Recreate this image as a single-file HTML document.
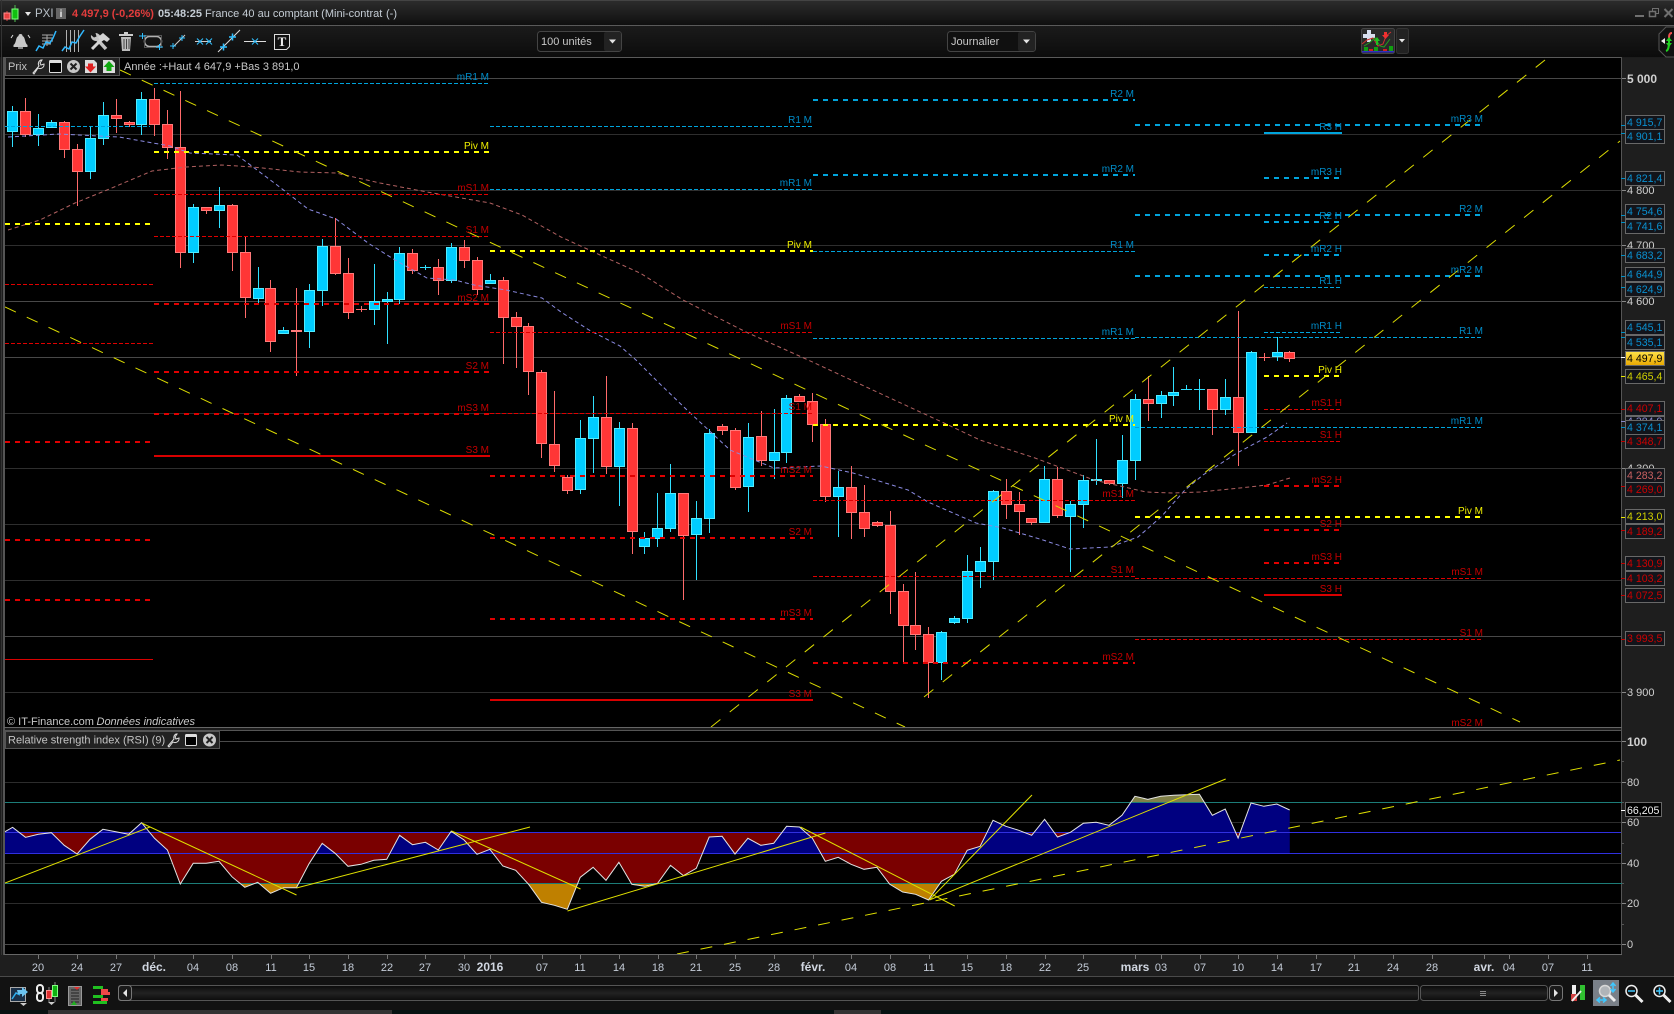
<!DOCTYPE html>
<html><head><meta charset="utf-8"><title>PXI</title>
<style>
html,body{margin:0;padding:0;background:#1c1c1c;width:1674px;height:1014px;overflow:hidden}
svg{display:block;position:absolute;left:0;top:0}
text{font-family:"Liberation Sans",sans-serif}
</style></head><body>
<svg width="1674" height="1014" viewBox="0 0 1674 1014" xmlns="http://www.w3.org/2000/svg">
<defs>
<linearGradient id="gt" x1="0" y1="0" x2="0" y2="1"><stop offset="0" stop-color="#2c2c2c"/><stop offset="1" stop-color="#0f0f0f"/></linearGradient>
<linearGradient id="gb" x1="0" y1="0" x2="0" y2="1"><stop offset="0" stop-color="#1b1b1b"/><stop offset="1" stop-color="#0c0c0c"/></linearGradient>
<linearGradient id="gs" x1="0" y1="0" x2="0" y2="1"><stop offset="0" stop-color="#0a0a0a"/><stop offset=".5" stop-color="#222"/><stop offset="1" stop-color="#0c0c0c"/></linearGradient>
<linearGradient id="gy" x1="0" y1="0" x2="0" y2="1"><stop offset="0" stop-color="#ffe24a"/><stop offset="1" stop-color="#e8a800"/></linearGradient>
<clipPath id="ca"><polygon points="5,731 5,831.7 12.6,827.3 25.5,837.3 38.4,834.3 51.3,832.7 64.2,845.3 77.1,854 90,839.3 102.9,829.3 115.8,831.7 128.7,834.3 141.6,822.7 154.5,838.3 167.4,850 180.3,884 193.2,863.3 206.1,863.3 219,861.3 231.9,876.7 244.8,887.3 257.7,882.3 270.6,893.3 283.5,887.7 296.4,887.7 309.3,863.3 322.2,843.3 335.1,853.3 348,866.3 360.9,864.3 373.8,860.3 386.7,859.3 399.6,835.3 412.5,844.7 425.4,842.3 438.3,850 451.2,831.3 464.1,840 477,854.3 489.9,849.3 502.8,866 515.7,870.3 528.6,884.3 541.5,902.3 554.4,905.3 567.3,909.3 580.2,877.3 593.1,867.3 606,880.3 618.9,862.3 631.8,884.3 644.7,886.3 657.6,883.3 670.5,865.3 683.4,875.7 696.3,868.3 709.2,837 722.1,836.3 735,854 747.9,838.3 760.8,845.3 773.7,843.3 786.6,826.3 799.5,827 812.4,838.3 825.3,861.3 838.2,857.3 851.1,864.3 864,869.3 876.9,867.3 889.8,884.3 902.7,892 915.6,894.3 928.5,900 941.4,881.3 954.3,874.3 967.2,850.3 980.1,846.3 993,820.3 1005.9,826.3 1018.8,830.3 1031.7,835.3 1044.6,819.3 1057.5,837 1070.4,832.3 1083.3,823.3 1096.2,822.3 1109.1,825.3 1122,815.3 1134.9,796.3 1147.8,799.3 1160.7,796.3 1173.6,795.3 1186.5,794.7 1199.4,794.3 1212.3,815.3 1225.2,809 1238.1,838 1251,803 1263.9,806.3 1276.8,804 1289.7,810 1290,731"/></clipPath>
<clipPath id="cb"><polygon points="5,954 5,831.7 12.6,827.3 25.5,837.3 38.4,834.3 51.3,832.7 64.2,845.3 77.1,854 90,839.3 102.9,829.3 115.8,831.7 128.7,834.3 141.6,822.7 154.5,838.3 167.4,850 180.3,884 193.2,863.3 206.1,863.3 219,861.3 231.9,876.7 244.8,887.3 257.7,882.3 270.6,893.3 283.5,887.7 296.4,887.7 309.3,863.3 322.2,843.3 335.1,853.3 348,866.3 360.9,864.3 373.8,860.3 386.7,859.3 399.6,835.3 412.5,844.7 425.4,842.3 438.3,850 451.2,831.3 464.1,840 477,854.3 489.9,849.3 502.8,866 515.7,870.3 528.6,884.3 541.5,902.3 554.4,905.3 567.3,909.3 580.2,877.3 593.1,867.3 606,880.3 618.9,862.3 631.8,884.3 644.7,886.3 657.6,883.3 670.5,865.3 683.4,875.7 696.3,868.3 709.2,837 722.1,836.3 735,854 747.9,838.3 760.8,845.3 773.7,843.3 786.6,826.3 799.5,827 812.4,838.3 825.3,861.3 838.2,857.3 851.1,864.3 864,869.3 876.9,867.3 889.8,884.3 902.7,892 915.6,894.3 928.5,900 941.4,881.3 954.3,874.3 967.2,850.3 980.1,846.3 993,820.3 1005.9,826.3 1018.8,830.3 1031.7,835.3 1044.6,819.3 1057.5,837 1070.4,832.3 1083.3,823.3 1096.2,822.3 1109.1,825.3 1122,815.3 1134.9,796.3 1147.8,799.3 1160.7,796.3 1173.6,795.3 1186.5,794.7 1199.4,794.3 1212.3,815.3 1225.2,809 1238.1,838 1251,803 1263.9,806.3 1276.8,804 1289.7,810 1290,954"/></clipPath>
<clipPath id="cp"><rect x="5" y="58" width="1616" height="669"/></clipPath>
<clipPath id="cr"><rect x="5" y="731" width="1616" height="223"/></clipPath>
</defs>

<!-- window chrome -->
<rect width="1674" height="1014" fill="#1c1c1c"/>
<rect x="0" y="1" width="1674" height="24" fill="url(#gt)"/>
<rect x="0" y="0" width="1674" height="1" fill="#444"/>
<rect x="0" y="25" width="1674" height="1" fill="#5a5a5a"/>
<rect x="0" y="26" width="1674" height="31" fill="url(#gb)"/>
<rect x="1" y="0" width="1" height="1010" fill="#333"/>
<rect x="3" y="57" width="2" height="920" fill="#555"/>

<!-- chart panels -->
<rect x="5" y="58" width="1616" height="669" fill="#000"/>
<rect x="5" y="731" width="1616" height="223" fill="#000"/>
<rect x="4" y="57" width="1618" height="1" fill="#5a5a5a"/>
<rect x="1621" y="57" width="1" height="898" fill="#555"/>
<rect x="4" y="727" width="1618" height="1" fill="#666"/>
<rect x="4" y="730" width="1618" height="1" fill="#555"/>
<rect x="4" y="954" width="1618" height="1" fill="#666"/>
<rect x="0" y="976" width="1674" height="1" fill="#4a4a4a"/>
<rect x="0" y="977" width="1674" height="33" fill="#121212"/>
<rect x="0" y="1010" width="1674" height="4" fill="#061212"/>
<rect x="48" y="1010" width="344" height="4" fill="#333"/>
<rect x="834" y="1010" width="47" height="4" fill="#333"/>

<!-- price grid -->
<g shape-rendering="crispEdges">
<path d="M5 78.5H1621M5 301.5H1621M5 357.5H1621M5 636.5H1621" stroke="#484848"/>
<path d="M5 134.5H1621M5 190.5H1621M5 245.5H1621M5 413.5H1621M5 468.5H1621M5 524.5H1621M5 580.5H1621M5 692.5H1621" stroke="#2e2e2e"/>
</g>

<!-- candles -->
<g shape-rendering="crispEdges" fill="none">
<path stroke="#ff6a6a" d="M25.5 98V137M64.5 121V158M77.5 144V206M116.5 99V133M129.5 121V127M154.5 88V136M167.5 110V159M180.5 91V268M206.5 207V214M232.5 204V271M245.5 236V318M270.5 280V352M296.5 288V376M335.5 218V275M348.5 258V319M361.5 306V312M412.5 249V274M438.5 259V295M464.5 240V268M477.5 257V295M503.5 277V364M516.5 312V368M528.5 323V395M541.5 370V458M554.5 391V472M567.5 475V494M606.5 376V474M632.5 423V554M683.5 493V600M722.5 424V435M735.5 428V490M761.5 411V466M799.5 394V402M812.5 393V442M825.5 419V502M851.5 466V539M864.5 485V537M877.5 521V527M890.5 511V614M903.5 584V663M915.5 572V650M928.5 627V698M1006.5 479V519M1019.5 492V535M1031.5 518V525M1057.5 467V518M1109.5 480V485M1148.5 376V421M1212.5 389V435M1238.5 311V466M1264.5 353V361M1289.5 351V362M356 309.5H367M1259 357.5H1270"/>
<path stroke="#30e0ff" d="M12.5 106V147M38.5 114V146M51.5 120V128M90.5 127V179M103.5 102V145M141.5 92V135M193.5 204V263M219.5 187V228M258.5 267V303M283.5 327V334M309.5 284V348M322.5 239V306M374.5 264V325M387.5 292V344M399.5 247V304M425.5 265V270M451.5 243V283M490.5 274V284M580.5 420V494M593.5 396V473M619.5 422V506M644.5 532V554M657.5 493V547M670.5 464V532M696.5 501V580M709.5 429V533M748.5 423V512M774.5 409V479M786.5 395V463M838.5 471V537M941.5 631V680M954.5 616V624M967.5 555V623M980.5 547V588M993.5 490V580M1044.5 466V523M1070.5 501V572M1083.5 475V528M1096.5 439V485M1122.5 435V498M1135.5 394V480M1161.5 391V418M1173.5 367V406M1186.5 385V390M1199.5 379V410M1225.5 379V415M1251.5 351V433M1277.5 337V361M420 267.5H431M1181 389.5H1192M1194 389.5H1205"/>
<path fill="#ff3636" stroke="#ff7a7a" d="M20.5 111.5h10v23h-10zM59.5 122.5h10v27h-10zM72.5 149.5h10v22h-10zM111.5 115.5h10v3h-10zM124.5 122.5h10v2h-10zM149.5 99.5h10v25h-10zM162.5 124.5h10v23h-10zM175.5 147.5h10v105h-10zM201.5 207.5h10v3h-10zM227.5 205.5h10v47h-10zM240.5 252.5h10v45h-10zM265.5 288.5h10v53h-10zM291.5 330.5h10v1h-10zM330.5 246.5h10v27h-10zM343.5 273.5h10v39h-10zM407.5 253.5h10v17h-10zM433.5 267.5h10v13h-10zM459.5 247.5h10v13h-10zM472.5 260.5h10v29h-10zM498.5 280.5h10v37h-10zM511.5 317.5h10v9h-10zM523.5 326.5h10v45h-10zM536.5 372.5h10v71h-10zM549.5 444.5h10v21h-10zM562.5 477.5h10v13h-10zM601.5 417.5h10v49h-10zM627.5 428.5h10v103h-10zM678.5 493.5h10v42h-10zM717.5 426.5h10v4h-10zM730.5 430.5h10v57h-10zM756.5 436.5h10v24h-10zM794.5 396.5h10v5h-10zM807.5 401.5h10v23h-10zM820.5 424.5h10v72h-10zM846.5 487.5h10v25h-10zM859.5 512.5h10v16h-10zM872.5 522.5h10v3h-10zM885.5 525.5h10v66h-10zM898.5 591.5h10v34h-10zM910.5 625.5h10v9h-10zM923.5 634.5h10v28h-10zM1001.5 491.5h10v13h-10zM1014.5 504.5h10v7h-10zM1026.5 518.5h10v4h-10zM1052.5 479.5h10v36h-10zM1104.5 480.5h10v3h-10zM1143.5 399.5h10v4h-10zM1207.5 389.5h10v20h-10zM1233.5 397.5h10v35h-10zM1284.5 352.5h10v6h-10z"/>
<path fill="#00ccff" stroke="#50ecff" d="M7.5 111.5h10v20h-10zM33.5 128.5h10v6h-10zM46.5 122.5h10v5h-10zM85.5 138.5h10v33h-10zM98.5 115.5h10v23h-10zM136.5 99.5h10v25h-10zM188.5 207.5h10v45h-10zM214.5 205.5h10v5h-10zM253.5 288.5h10v10h-10zM278.5 330.5h10v3h-10zM304.5 290.5h10v41h-10zM317.5 246.5h10v44h-10zM369.5 301.5h10v8h-10zM382.5 299.5h10v2h-10zM394.5 253.5h10v46h-10zM446.5 247.5h10v33h-10zM485.5 280.5h10v3h-10zM575.5 438.5h10v51h-10zM588.5 417.5h10v21h-10zM614.5 428.5h10v38h-10zM639.5 538.5h10v8h-10zM652.5 528.5h10v10h-10zM665.5 493.5h10v35h-10zM691.5 518.5h10v16h-10zM704.5 433.5h10v85h-10zM743.5 437.5h10v49h-10zM769.5 452.5h10v8h-10zM781.5 398.5h10v54h-10zM833.5 487.5h10v9h-10zM936.5 632.5h10v30h-10zM949.5 618.5h10v4h-10zM962.5 571.5h10v47h-10zM975.5 561.5h10v10h-10zM988.5 491.5h10v70h-10zM1039.5 479.5h10v43h-10zM1065.5 504.5h10v12h-10zM1078.5 480.5h10v24h-10zM1091.5 479.5h10v1h-10zM1117.5 460.5h10v23h-10zM1130.5 399.5h10v61h-10zM1156.5 395.5h10v8h-10zM1168.5 392.5h10v3h-10zM1220.5 397.5h10v12h-10zM1246.5 352.5h10v80h-10zM1272.5 352.5h10v4h-10z"/>
</g>

<!-- moving averages -->
<g fill="none" stroke-width="1" stroke-dasharray="4 3" clip-path="url(#cp)">
<polyline stroke="#8a8ae0" points="8,137 59,134 119,137 170,146 190,153 237,155 277,185 308,209 336,219 368,243 395,260 427,278 455,280 474,285 506,290 542,298 561,312 589,330 620,346 636,360 659,383 687,410 730,450 774,468 821,466 853,473 908,490 928,502 976,523 1003,528 1043,540 1070,549 1110,547 1138,537 1161,517 1185,490 1203,475 1237,453 1267,437 1287,423"/>
<polyline stroke="#b06060" points="8,230 40,220 75,203 107,190 152,171 186,167 221,165 253,167 300,172 336,173 380,183 427,192 490,203 522,215 561,237 585,248 600,255 640,273 683,300 746,332 806,359 877,392 944,423 980,440 1035,458 1094,480 1146,492 1173,493 1200,492 1240,488 1267,485 1290,478"/>
</g>

<!-- pivot levels -->
<g fill="none" shape-rendering="crispEdges">
<path stroke="#00a4dc" stroke-width="2" stroke-dasharray="5 5" d="M813 100H1135M813 175H1135M1135 125H1480M1135 215H1480M1135 276H1480M1264 178H1340M1264 222H1340M1264 255H1340"/>
<g transform="translate(0,.5)">
<path stroke="#00a4dc" stroke-dasharray="4 2" d="M154 83H490M5 126H150M490 126H813M490 189H813M813 251H1135M813 338H1135M1135 337H1483M1135 427H1483M1264 287H1342M1264 332H1342"/>
<path stroke="#e00000" stroke-dasharray="4 2" d="M5 284H153M5 343H153M154 194H490M154 236H490M490 332H813M490 413H813M813 500H1135M813 576H1135M1135 578H1483M1135 639H1483M1264 409H1342M1264 441H1342"/>
<path stroke="#d80000" d="M5 659H153"/>
</g>
<path stroke="#ffff00" stroke-width="2" stroke-dasharray="5 5" d="M154 152H490M5 224H150M490 251H813M813 425H1135M1135 517H1480M1264 376H1340"/>
<path stroke="#e00000" stroke-width="2" stroke-dasharray="5 5" d="M154 304H490M154 372H490M154 414H490M490 476H813M490 538H813M490 619H813M813 663H1135M1264 486H1340M1264 530H1340M1264 563H1340M5 442H150M5 540H150M5 600H150"/>
<path stroke="#d80000" stroke-width="2" d="M154 456H490M490 700H813M1264 595H1342"/>
<path stroke="#00a4dc" stroke-width="2" d="M1264 133H1342"/>
</g>

<!-- diagonals -->
<g fill="none" stroke="#dcdc00" stroke-width="1" stroke-dasharray="12 12" clip-path="url(#cp)">
<path d="M120 70L1520 722"/>
<path d="M5 307L905 727"/>
<path d="M711 727L1545 60"/>
<path d="M924 697L1620 141"/>
</g>

<!-- level labels -->
<g font-size="10" text-anchor="end">
<g fill="#008cc8">
<text x="489" y="80">mR1 M</text>
<text x="812" y="123">R1 M</text>
<text x="812" y="186">mR1 M</text>
<text x="1134" y="97">R2 M</text>
<text x="1134" y="172">mR2 M</text>
<text x="1134" y="248">R1 M</text>
<text x="1134" y="335">mR1 M</text>
<text x="1483" y="122">mR3 M</text>
<text x="1483" y="212">R2 M</text>
<text x="1483" y="273">mR2 M</text>
<text x="1483" y="334">R1 M</text>
<text x="1483" y="424">mR1 M</text>
<text x="1342" y="130">R3 H</text>
<text x="1342" y="175">mR3 H</text>
<text x="1342" y="219">R2 H</text>
<text x="1342" y="252">mR2 H</text>
<text x="1342" y="284">R1 H</text>
<text x="1342" y="329">mR1 H</text>
</g>
<g fill="#f0f000">
<text x="489" y="149">Piv M</text>
<text x="812" y="248">Piv M</text>
<text x="1134" y="422">Piv M</text>
<text x="1483" y="514">Piv M</text>
<text x="1342" y="373">Piv H</text>
</g>
<g fill="#c40000">
<text x="489" y="191">mS1 M</text>
<text x="489" y="233">S1 M</text>
<text x="489" y="301">mS2 M</text>
<text x="489" y="369">S2 M</text>
<text x="489" y="411">mS3 M</text>
<text x="489" y="453">S3 M</text>
<text x="812" y="329">mS1 M</text>
<text x="812" y="410">S1 M</text>
<text x="812" y="473">mS2 M</text>
<text x="812" y="535">S2 M</text>
<text x="812" y="616">mS3 M</text>
<text x="812" y="697">S3 M</text>
<text x="1134" y="497">mS1 M</text>
<text x="1134" y="573">S1 M</text>
<text x="1134" y="660">mS2 M</text>
<text x="1483" y="575">mS1 M</text>
<text x="1483" y="636">S1 M</text>
<text x="1483" y="726">mS2 M</text>
<text x="1342" y="406">mS1 H</text>
<text x="1342" y="438">S1 H</text>
<text x="1342" y="483">mS2 H</text>
<text x="1342" y="527">S2 H</text>
<text x="1342" y="560">mS3 H</text>
<text x="1342" y="592">S3 H</text>
</g>
</g>

<!-- RSI -->
<g shape-rendering="crispEdges">
<path d="M5 741.5H1621M5 944.5H1621" stroke="#4a4a4a"/>
<path d="M5 782.5H1621M5 822.5H1621M5 863.5H1621M5 903.5H1621" stroke="#2c2c2c"/>
</g>
<g clip-path="url(#ca)"><rect x="5" y="832" width="1285" height="51" fill="#7a0000"/><rect x="5" y="883" width="1285" height="71" fill="#bf8000"/></g>
<g clip-path="url(#cb)"><rect x="5" y="802" width="1285" height="51" fill="#000080"/><rect x="5" y="731" width="1285" height="71" fill="#808048"/></g>
<g shape-rendering="crispEdges">
<path d="M5 802.5H1627M5 883.5H1627" stroke="#1c7c78"/>
<path d="M5 832.5H1621M5 853.5H1621" stroke="#3030e0"/>
</g>
<polyline fill="none" stroke="#e4e4e4" stroke-width="1" points="5,831.7 12.6,827.3 25.5,837.3 38.4,834.3 51.3,832.7 64.2,845.3 77.1,854 90,839.3 102.9,829.3 115.8,831.7 128.7,834.3 141.6,822.7 154.5,838.3 167.4,850 180.3,884 193.2,863.3 206.1,863.3 219,861.3 231.9,876.7 244.8,887.3 257.7,882.3 270.6,893.3 283.5,887.7 296.4,887.7 309.3,863.3 322.2,843.3 335.1,853.3 348,866.3 360.9,864.3 373.8,860.3 386.7,859.3 399.6,835.3 412.5,844.7 425.4,842.3 438.3,850 451.2,831.3 464.1,840 477,854.3 489.9,849.3 502.8,866 515.7,870.3 528.6,884.3 541.5,902.3 554.4,905.3 567.3,909.3 580.2,877.3 593.1,867.3 606,880.3 618.9,862.3 631.8,884.3 644.7,886.3 657.6,883.3 670.5,865.3 683.4,875.7 696.3,868.3 709.2,837 722.1,836.3 735,854 747.9,838.3 760.8,845.3 773.7,843.3 786.6,826.3 799.5,827 812.4,838.3 825.3,861.3 838.2,857.3 851.1,864.3 864,869.3 876.9,867.3 889.8,884.3 902.7,892 915.6,894.3 928.5,900 941.4,881.3 954.3,874.3 967.2,850.3 980.1,846.3 993,820.3 1005.9,826.3 1018.8,830.3 1031.7,835.3 1044.6,819.3 1057.5,837 1070.4,832.3 1083.3,823.3 1096.2,822.3 1109.1,825.3 1122,815.3 1134.9,796.3 1147.8,799.3 1160.7,796.3 1173.6,795.3 1186.5,794.7 1199.4,794.3 1212.3,815.3 1225.2,809 1238.1,838 1251,803 1263.9,806.3 1276.8,804 1289.7,810"/>
<g fill="none" stroke="#e0e000" stroke-width="1" clip-path="url(#cr)">
<path d="M5 883L150 827"/>
<path d="M141.5 823L296.5 895"/>
<path d="M296.5 888L530 827"/>
<path d="M451.5 831L580.5 889"/>
<path d="M567.5 911L825.4 833"/>
<path d="M800.5 827L954.7 906"/>
<path d="M929.4 900L1032 795"/>
<path d="M929.4 900L1225.7 779"/>
<path d="M677 954L1620 760" stroke-dasharray="12 12"/>
</g>

<!-- right axis -->
<rect x="1622" y="58" width="52" height="918" fill="#1e1e1e"/>
<g shape-rendering="crispEdges" stroke="#888">
<path d="M1622 78.5H1626M1622 190.5H1626M1622 245.5H1626M1622 301.5H1626M1622 468.5H1626M1622 692.5H1626M1622 741.5H1626M1622 782.5H1626M1622 822.5H1626M1622 863.5H1626M1622 903.5H1626M1622 944.5H1626"/>
<path stroke="#555" d="M1622 843.5H1624M1622 924.5H1624M1622 761.5H1624M1622 802.5H1624M1622 883.5H1624"/>
<path stroke="#0090c8" d="M1621 125.5H1625M1621 133.5H1625M1621 178.5H1625M1621 215.5H1625M1621 222.5H1625M1621 255.5H1625M1621 276.5H1625M1621 287.5H1625M1621 332.5H1625M1621 337.5H1625M1621 427.5H1625"/>
<path stroke="#e8e800" d="M1621 376.5H1625M1621 517.5H1625"/>
<path stroke="#ffffff" d="M1621 357.5H1625M1621 810.5H1626"/>
<path stroke="#c00000" d="M1621 409.5H1625M1621 441.5H1625M1621 486.5H1625M1621 530.5H1625M1621 563.5H1625M1621 578.5H1625M1621 595.5H1625M1621 639.5H1625"/>
<path stroke="#8888cc" d="M1621 421.5H1625"/>
</g>
<g fill="#d0d0d0" font-size="11">
<text x="1627" y="83" font-size="12" font-weight="bold">5 000</text>
<text x="1627" y="194">4 800</text>
<text x="1627" y="249">4 700</text>
<text x="1627" y="305">4 600</text>
<text x="1627" y="472">4 300</text>
<text x="1627" y="696">3 900</text>
<text x="1627" y="746" font-size="12" font-weight="bold">100</text>
<text x="1627" y="786">80</text>
<text x="1627" y="826">60</text>
<text x="1627" y="867">40</text>
<text x="1627" y="907">20</text>
<text x="1627" y="948">0</text>
</g>
<g shape-rendering="crispEdges" fill="#12141a" stroke="#686868">
<rect x="1625.5" y="115.5" width="39" height="14"/>
<rect x="1625.5" y="129.5" width="39" height="14"/>
<rect x="1625.5" y="171.5" width="39" height="14"/>
<rect x="1625.5" y="204.5" width="39" height="14"/>
<rect x="1625.5" y="219.5" width="39" height="14"/>
<rect x="1625.5" y="248.5" width="39" height="14"/>
<rect x="1625.5" y="267.5" width="39" height="14"/>
<rect x="1625.5" y="282.5" width="39" height="14"/>
<rect x="1625.5" y="320.5" width="39" height="14"/>
<rect x="1625.5" y="335.5" width="39" height="14"/>
<rect x="1625.5" y="369.5" width="39" height="14"/>
<rect x="1625.5" y="401.5" width="39" height="14"/>
<rect x="1625.5" y="434.5" width="39" height="14"/>
<rect x="1625.5" y="468.5" width="39" height="14"/>
<rect x="1625.5" y="482.5" width="39" height="14"/>
<rect x="1625.5" y="509.5" width="39" height="14"/>
<rect x="1625.5" y="524.5" width="39" height="14"/>
<rect x="1625.5" y="556.5" width="39" height="14"/>
<rect x="1625.5" y="571.5" width="39" height="14"/>
<rect x="1625.5" y="588.5" width="39" height="14"/>
<rect x="1625.5" y="631.5" width="39" height="14"/>
<rect x="1625.5" y="351.5" width="39" height="14" fill="url(#gy)"/>
<rect x="1625.5" y="802.5" width="36" height="14" fill="#000"/>
</g>
<g font-size="10.6">
<g fill="#0a90d0">
<text x="1627" y="126">4 915,7</text>
<text x="1627" y="140">4 901,1</text>
<text x="1627" y="182">4 821,4</text>
<text x="1627" y="215">4 754,6</text>
<text x="1627" y="230">4 741,6</text>
<text x="1627" y="259">4 683,2</text>
<text x="1627" y="278">4 644,9</text>
<text x="1627" y="293">4 624,9</text>
<text x="1627" y="331">4 545,1</text>
<text x="1627" y="346">4 535,1</text>
</g>
<g fill="#d0d000">
<text x="1627" y="380">4 465,4</text>
<text x="1627" y="520">4 213,0</text>
</g>
<g fill="#cc0000">
<text x="1627" y="412">4 407,1</text>
<text x="1627" y="445">4 348,7</text>
<text x="1627" y="493">4 269,0</text>
<text x="1627" y="535">4 189,2</text>
<text x="1627" y="567">4 130,9</text>
<text x="1627" y="582">4 103,2</text>
<text x="1627" y="599">4 072,5</text>
<text x="1627" y="642">3 993,5</text>
</g>
<text x="1627" y="479" fill="#c86060">4 283,2</text>
<text x="1627" y="362" fill="#000">4 497,9</text>
<text x="1627" y="814" fill="#f0f0f0">66,205</text>
<rect x="1625.5" y="416.5" width="39" height="14" fill="#12141a" stroke="#686868" shape-rendering="crispEdges"/>
<text x="1627" y="425" fill="#8888cc">4 384,9</text>
<rect x="1625.5" y="420.5" width="39" height="14" fill="#12141a" stroke="#686868" shape-rendering="crispEdges"/>
<text x="1627" y="431" fill="#0a90d0">4 374,1</text>
</g>

<!-- x axis -->
<rect x="0" y="955" width="1674" height="21" fill="#1e1e1e"/>
<rect x="4" y="954" width="1618" height="1" fill="#666"/>
<path shape-rendering="crispEdges" stroke="#777" d="M38.5 955v4M77.5 955v4M116.5 955v4M154.5 955v4M193.5 955v4M232.5 955v4M271.5 955v4M309.5 955v4M348.5 955v4M387.5 955v4M425.5 955v4M464.5 955v4M490.5 955v4M542.5 955v4M580.5 955v4M619.5 955v4M658.5 955v4M696.5 955v4M735.5 955v4M774.5 955v4M813.5 955v4M851.5 955v4M890.5 955v4M929.5 955v4M967.5 955v4M1006.5 955v4M1045.5 955v4M1083.5 955v4M1135.5 955v4M1161.5 955v4M1200.5 955v4M1238.5 955v4M1277.5 955v4M1316.5 955v4M1354.5 955v4M1393.5 955v4M1432.5 955v4M1484.5 955v4M1509.5 955v4M1548.5 955v4M1587.5 955v4"/>
<g fill="#c4ccd8" font-size="11" text-anchor="middle">
<text x="38" y="971">20</text><text x="77" y="971">24</text><text x="116" y="971">27</text>
<text x="193" y="971">04</text><text x="232" y="971">08</text><text x="271" y="971">11</text><text x="309" y="971">15</text><text x="348" y="971">18</text><text x="387" y="971">22</text><text x="425" y="971">27</text><text x="464" y="971">30</text>
<text x="542" y="971">07</text><text x="580" y="971">11</text><text x="619" y="971">14</text><text x="658" y="971">18</text><text x="696" y="971">21</text><text x="735" y="971">25</text><text x="774" y="971">28</text>
<text x="851" y="971">04</text><text x="890" y="971">08</text><text x="929" y="971">11</text><text x="967" y="971">15</text><text x="1006" y="971">18</text><text x="1045" y="971">22</text><text x="1083" y="971">25</text>
<text x="1161" y="971">03</text><text x="1200" y="971">07</text><text x="1238" y="971">10</text><text x="1277" y="971">14</text><text x="1316" y="971">17</text><text x="1354" y="971">21</text><text x="1393" y="971">24</text><text x="1432" y="971">28</text>
<text x="1509" y="971">04</text><text x="1548" y="971">07</text><text x="1587" y="971">11</text>
</g>
<g fill="#d0d6e0" font-size="12" font-weight="bold" text-anchor="middle">
<text x="154" y="971">déc.</text><text x="490" y="971">2016</text><text x="813" y="971">févr.</text><text x="1135" y="971">mars</text><text x="1484" y="971">avr.</text>
</g>

<!-- footer text -->
<text x="7" y="725" font-size="11" fill="#c8c8c8">© IT-Finance.com <tspan x="96.500" font-style="italic">Données indicatives</tspan></text>

<!-- Prix legend -->
<rect x="5.5" y="57.5" width="114" height="18" fill="#222" stroke="#555" shape-rendering="crispEdges"/>
<text x="8" y="70" font-size="11" fill="#c4c4c4">Prix</text>
<path d="M33 73l6-7a4 4 0 0 1 2-6l1 0-2 3 1 2 3-1a4 4 0 0 1-6 4l-4 6z" fill="none" stroke="#e0e0e0"/>
<rect x="49.5" y="60.5" width="12" height="12" rx="1" fill="#000" stroke="#ddd"/><rect x="50" y="60" width="11" height="3" fill="#ddd"/>
<circle cx="73.5" cy="66.5" r="6.5" fill="#c8c8c8"/><path d="M70.5 63.5l6 6M76.5 63.5l-6 6" stroke="#222" stroke-width="2"/>
<path d="M85 60h9l3 3v10H85z" fill="#ddd"/><path d="M88 63h5v3h3l-5.500 6-5.500-6h3z" fill="#e02020" transform="translate(0,.5)"/>
<path d="M103 60h9l3 3v10h-12z" fill="#ddd"/><path d="M109 61l5.500 6h-3v4h-5v-4h-3z" fill="#10a810"/>
<text x="124" y="70" font-size="11" fill="#c8c8c8">Année :+Haut 4 647,9 +Bas 3 891,0</text>

<!-- RSI legend -->
<rect x="5.500" y="731.500" width="214" height="17" fill="#222" stroke="#555" shape-rendering="crispEdges"/>
<text x="8" y="743.500" font-size="11" fill="#c4c4c4">Relative strength index (RSI) (9)</text>
<path d="M168 746l6-7a4 4 0 0 1 2-5l1 0-2 3 1 2 3-1a4 4 0 0 1-6 4l-4 5z" fill="none" stroke="#e0e0e0"/>
<rect x="185.500" y="734.500" width="11" height="11" rx="1" fill="#000" stroke="#ddd"/><rect x="186" y="734" width="10" height="3" fill="#ddd"/>
<circle cx="209.500" cy="740" r="6.500" fill="#c8c8c8"/><path d="M206.500 737l6 6M212.500 737l-6 6" stroke="#222" stroke-width="2"/>

<!-- title bar -->
<g>
<path d="M7 11v10" stroke="#d04040"/><path d="M15 5v17" stroke="#50c050"/>
<rect x="4" y="13" width="6" height="6" fill="#e84040" stroke="#ff9090"/>
<rect x="12" y="9" width="6" height="10" fill="#10c010" stroke="#80ff80"/>
<path d="M25 12h6l-3 4z" fill="#e8e8e8"/>
<text x="35" y="17" font-size="11.500" fill="#b8c0c8">PXI</text>
<rect x="56" y="8" width="10" height="11" fill="#666"/><text x="61" y="17" font-size="10" font-weight="bold" fill="#eee" text-anchor="middle">i</text>
<text x="72" y="17" font-size="11" font-weight="bold" fill="#e23c3c">4 497,9 (-0,26%)</text>
<text x="158" y="17" font-size="11" font-weight="bold" fill="#c4ccd4">05:48:25</text>
<text x="205" y="17" font-size="11" fill="#c4ccd4">France 40 au comptant (Mini-contrat <tspan x="386">(-)</tspan></text>
</g>
<!-- window buttons -->
<g fill="none" stroke="#707070">
<rect x="1635" y="15" width="9" height="2" fill="#707070" stroke="none"/>
<path d="M1652.500 11.500v-3h6v5h-3"/><rect x="1649.500" y="11.500" width="6" height="5" stroke-width="1.500"/>
<path d="M1664.500 9l8 8M1672.500 9l-8 8" stroke-width="2"/>
</g>

<!-- toolbar icons -->
<g>
<!-- bell -->
<path d="M20.500 34a2 2 0 0 1 2 2c3 1 2 7 5 9v2h-14v-2c3-2 2-8 5-9a2 2 0 0 1 2-2z" fill="#c8c8c8"/><rect x="18" y="47" width="5" height="2" fill="#888"/>
<path d="M13 35l-2 3M28 35l2 3" stroke="#ddd" fill="none"/>
<!-- chart grid -->
<path d="M42 35h11M42 38h11M42 41h11M42 44h9M47 35v11" stroke="#aaa" fill="none"/>
<path d="M36 51l3-5 4 2 3-6 4 1 3-5 3-7" stroke="#30b8ff" fill="none" stroke-width="1.500"/>
<!-- v lines -->
<path d="M66.500 30v22M70.500 30v22M74.500 30v22M78.500 30v22" stroke="#b0b0b0"/>
<path d="M62 51l3-4 4 2 3-7 4 1 4-7 4-6" stroke="#30b8ff" fill="none" stroke-width="1.500"/>
<!-- hammer and wrench -->
<path d="M106 49L96 38" stroke="#c4c4c4" stroke-width="3.500" fill="none"/>
<path d="M96 41a5 5 0 0 1-5-6l3 2.500 2.500-1-1-3.500a5 5 0 0 1 5 6z" fill="#c4c4c4"/>
<path d="M92 49L103 38" stroke="#d4d4d4" stroke-width="3" fill="none"/>
<path d="M98 37l5-4 7 6-3 3-3-2-3 2z" fill="#d4d4d4"/>
<!-- trash -->
<path d="M121 37h10l-1 14h-8z" fill="#bcbcbc"/><rect x="119" y="34" width="14" height="2" fill="#ccc"/><rect x="124" y="32" width="4" height="2" fill="#ccc"/>
<path d="M124 39v10M126.500 39v10M129 39v10" stroke="#444"/>
<!-- rect -->
<rect x="144.500" y="36.500" width="17" height="10" rx="5" fill="none" stroke="#b0b0b0" stroke-width="1.500"/><rect x="144.500" y="35.500" width="17" height="12" fill="none" stroke="#555"/>
<path d="M139 36h7M142.500 33v6M156 47h7M159.500 44v6" stroke="#30c0ff"/>
<!-- line -->
<path d="M173 47l12-12" stroke="#ccc"/><path d="M170 46h6M173 43v6M179 38h6M182 35v6" stroke="#30c0ff"/>
<!-- extended -->
<path d="M195 41.500h16" stroke="#ccc"/><path d="M197 38.500l3 3-3 3M203 38.500l-3 3 3 3M206 38.500l3 3-3 3M212 38.500l-3 3 3 3" stroke="#30c0ff" fill="none"/>
<!-- diagonal -->
<path d="M218 52l22-22" stroke="#ddd"/><path d="M220 47h7M223.500 43.500v7M229 37h7M232.500 33.500v7" stroke="#30c0ff" stroke-width="1.500"/>
<!-- horizontal -->
<path d="M244 41.500h22" stroke="#ddd"/><path d="M252 38.500l3 3-3 3M258 38.500l-3 3 3 3" stroke="#30c0ff" fill="none"/>
<!-- T -->
<path d="M274.500 34.500h15v12l-3 3h-12z" fill="#111" stroke="#ddd"/><text x="282" y="46" font-size="13" font-weight="bold" fill="#eee" text-anchor="middle" style="font-family:'Liberation Serif',serif">T</text>
</g>

<!-- dropdowns -->
<rect x="537.500" y="31.500" width="84" height="20" rx="3" fill="#101010" stroke="#444"/>
<rect x="604" y="32" width="17" height="19" rx="2" fill="#222"/>
<rect x="947.500" y="31.500" width="88" height="20" rx="3" fill="#101010" stroke="#444"/>
<rect x="1018" y="32" width="17" height="19" rx="2" fill="#222"/>
<path d="M609 39.500h7l-3.500 4zM1023 39.500h7l-3.500 4z" fill="#e4e4e4"/>
<text x="541" y="45" font-size="11" fill="#c8c8c8">100 unités</text>
<text x="951" y="45" font-size="11" fill="#c8c8c8">Journalier</text>

<!-- indicator button -->
<rect x="1361.500" y="28.500" width="33" height="25" rx="2" fill="#2a2a2a" stroke="#444"/>
<rect x="1396.500" y="28.500" width="12" height="25" rx="2" fill="#222" stroke="#333"/>
<path d="M1399 39h6l-3 3.500z" fill="#e8e8e8"/>
<path d="M1367 30h4v4h4v4h-4v4h-4v-4h-4v-4h4z" fill="#d8e0f0"/>
<path d="M1362 44l5-4 6-2 5 8 5-2 3-8 5-4" fill="none" stroke="#d03030"/>
<path d="M1364 46l5-3 6-5 5 8 4 1 6-8" fill="none" stroke="#20a020"/>
<path d="M1374 41l3-4 3 4h-2v4h-2v-4z" fill="#20c020"/><path d="M1384 32h3v3h2l-3.500 4-3.500-4h2z" fill="#f03030"/>
<path d="M1364 47h4v4h-4zM1374 47h4v4h-4zM1389 46h4v5h-4z" fill="#10a010"/><path d="M1369 49h4v2h-4zM1383 49h4v2h-4z" fill="#d02020"/>
<rect x="1362" y="51" width="32" height="1.500" fill="#3030c0"/>
<!-- f icon -->
<path d="M1674 27h-8l-7 7v16l7 7h8" fill="#111" stroke="#555"/>
<path d="M1661 41l4-3v6z" fill="#eee"/>
<path d="M1672 33c-3 0-3 3-3 6" stroke="#f05050" fill="none" stroke-width="2"/><path d="M1669 41c0 4 0 9-3 10" stroke="#20d020" fill="none" stroke-width="2"/><path d="M1669 37l3 4h-6zM1669 47l3-4h-6z" fill="#20d020"/>

<!-- bottom toolbar icons -->
<g>
<rect x="10.500" y="987.500" width="15" height="14" fill="#1a3048" stroke="#aaa"/>
<path d="M12 999l4-6 4 2" fill="none" stroke="#30b0f0" stroke-width="1.500"/><path d="M17 990h5v-3l6 5-6 5v-3h-4z" fill="#6cc4f0"/>
<path d="M20 1003h7l-3.500 3z" fill="#ccc"/>
<rect x="37" y="985" width="6" height="8" rx="3" fill="none" stroke="#eee" stroke-width="2"/><rect x="37" y="993" width="6" height="8" rx="3" fill="none" stroke="#eee" stroke-width="2"/>
<path d="M49 987v15M55 982v20" stroke="#888"/><rect x="46.500" y="990.500" width="5" height="8" fill="#e03030" stroke="#ff9090"/><rect x="52.500" y="985.500" width="5" height="11" fill="#10b010" stroke="#80ff80"/>
<path d="M48 1002h7l-3.500 3z" fill="#ccc"/>
<rect x="68.500" y="986.500" width="13" height="19" fill="#666" stroke="#999"/>
<path d="M71 990h8M71 993h8M71 996h8M71 999h8M71 1002h8" stroke="#222"/><path d="M71 1005l3-4 3 4z" fill="#20b020"/><path d="M74 987h6l-3 3z" fill="#e03030"/>
<path d="M93 986h10v3H93zM93 995h10v3H93zM93 1001h14v3H93z" fill="#20c020"/><path d="M101 989h7v3h-7zM101 992h9v3h-9zM101 998h7v3h-7z" fill="#f04848"/>
</g>
<!-- scrollbar -->
<rect x="118.500" y="985.500" width="1300" height="15" rx="2" fill="url(#gs)" stroke="#555"/>
<rect x="118.500" y="985.500" width="13" height="15" rx="3" fill="#1a1a1a" stroke="#777"/><path d="M127 989v8l-4-4z" fill="#e4e4e4"/>
<rect x="1420.500" y="985.500" width="127" height="15" rx="3" fill="url(#gs)" stroke="#555"/>
<path d="M1480 991.500h6M1480 993.500h6M1480 995.500h6" stroke="#888"/>
<rect x="1549.500" y="985.500" width="13" height="15" rx="3" fill="#1a1a1a" stroke="#777"/><path d="M1554 989v8l4-4z" fill="#e4e4e4"/>
<!-- right bottom icons -->
<rect x="1572" y="985" width="4" height="16" fill="#eee"/><rect x="1580" y="985" width="5" height="15" fill="#30c030"/><rect x="1571" y="994" width="6" height="7" fill="#d04040"/>
<path d="M1572 1001l9-10" stroke="#eee" stroke-width="2"/>
<rect x="1593" y="980" width="26" height="26" fill="#7a8088"/>
<circle cx="1605" cy="991" r="5.500" fill="#b0b4b8" stroke="#d8d8d8" stroke-width="1.500"/><path d="M1609 995l6 6" stroke="#eee" stroke-width="3"/>
<path d="M1613 983v9M1610.500 986l2.500-3 2.500 3M1610.500 989l2.500 3 2.500-3M1597 1000h9M1600 997.500l-3 2.500 3 2.500M1603 997.500l3 2.500-3 2.500" stroke="#40c8ff" fill="none" stroke-width="1.500"/>
<circle cx="1631.500" cy="991" r="5.500" fill="#101010" stroke="#eee" stroke-width="1.500"/><path d="M1635.500 995l7 7" stroke="#eee" stroke-width="3"/><path d="M1628 991h7" stroke="#40c8ff" stroke-width="1.500"/>
<circle cx="1659.500" cy="991" r="5.500" fill="#101010" stroke="#eee" stroke-width="1.500"/><path d="M1663.500 995l7 7" stroke="#eee" stroke-width="3"/><path d="M1656 991h7M1659.500 987.500v7" stroke="#40c8ff" stroke-width="1.500"/>
</svg>
</body></html>
